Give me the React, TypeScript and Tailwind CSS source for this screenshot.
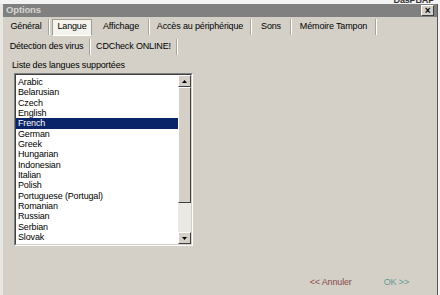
import React from "react";

const langs = [
  "Arabic",
  "Belarusian",
  "Czech",
  "English",
  "French",
  "German",
  "Greek",
  "Hungarian",
  "Indonesian",
  "Italian",
  "Polish",
  "Portuguese (Portugal)",
  "Romanian",
  "Russian",
  "Serbian",
  "Slovak",
  "Slovenian",
];

const Tab = ({ label, w, active }: { label: string; w: string; active?: boolean }) => (
  <div className={`${w} h-full flex items-center shrink-0`}>
    {active ? (
      <div className="h-[17px] flex-1 mx-[2px] flex items-center justify-center bg-[#f4f3ee] border border-[#a09c94] border-b-white">
        {label}
      </div>
    ) : (
      <>
        <div className="flex-1 flex items-center justify-center">{label}</div>
        <div className="h-[16px] w-[2px] border-l border-[#a8a49c] border-r border-r-white" />
      </>
    )}
  </div>
);

export default function App() {
  return (
    <div
      className="w-[440px] h-[295px] overflow-hidden bg-[#d4d0c8] text-[9px] text-black flex flex-col tracking-[-0.15px]"
      style={{ fontFamily: "'Liberation Sans', Arial, sans-serif" }}
    >
      {/* strip above window */}
      <div className="h-[4px] bg-[#f3f3f3] relative shrink-0">
        <div className="absolute right-[6px] -top-[6px] text-[9px] font-bold text-[#333]">DasPBAP</div>
      </div>

      <div className="flex flex-1 min-h-0">
        <div className="flex-1 flex flex-col border-l-[3px] border-[#e8e6e0] border-r border-r-[#555]">
          {/* title bar */}
          <div className="h-[13px] bg-[#808080] flex items-center justify-between pl-[3px] pr-[3px] shrink-0">
            <span className="font-bold text-[#d8d6d0] text-[9.5px]">Options</span>
            <div className="w-[13px] h-[11px] bg-[#d4d0c8] border border-white border-r-[#404040] border-b-[#404040] flex items-center justify-center text-[10px] font-bold leading-none">
              ×
            </div>
          </div>

          {/* tabs */}
          <div className="h-[20px] flex items-center pl-[1px] shrink-0">
            <Tab label="Général" w="w-[46px]" />
            <Tab label="Langue" w="w-[44px]" active />
            <Tab label="Affichage" w="w-[56px]" />
            <Tab label="Accès au périphérique" w="w-[102px]" />
            <Tab label="Sons" w="w-[40px]" />
            <Tab label="Mémoire Tampon" w="w-[85px]" />
          </div>
          <div className="h-[20px] flex items-center pl-[1px] shrink-0">
            <Tab label="Détection des virus" w="w-[87px]" />
            <Tab label="CDCheck ONLINE!" w="w-[87px]" />
          </div>

          {/* content */}
          <div className="flex-1 flex flex-col pl-[9px] pt-[2px]">
            <div className="leading-[12px]">Liste des langues supportées</div>
            <div className="mt-[2px] ml-[2px] w-[179px] h-[173px] border border-[#808080] border-r-white border-b-white flex">
              <div className="flex-1 border border-[#404040] border-r-[#d4d0c8] border-b-[#d4d0c8] flex bg-white overflow-hidden">
                <div className="flex-1 pt-[2px] overflow-hidden">
                  {langs.map((l) => (
                    <div
                      key={l}
                      className={`h-[10.35px] leading-[10.35px] pl-[2px] ${
                        l === "French" ? "bg-[#0a246a] text-white" : ""
                      }`}
                    >
                      {l}
                    </div>
                  ))}
                </div>
                {/* scrollbar */}
                <div className="w-[13px] flex flex-col bg-[#ebe9e4]">
                  <div className="h-[12px] bg-[#d4d0c8] border border-white border-r-[#404040] border-b-[#404040] flex items-center justify-center">
                    <svg width="5" height="3" viewBox="0 0 5 3">
                      <path d="M2.5 0L5 3H0z" fill="#000" />
                    </svg>
                  </div>
                  <div className="h-[116px] bg-[#d4d0c8] border border-white border-r-[#404040] border-b-[#404040]" />
                  <div className="flex-1" />
                  <div className="h-[12px] bg-[#d4d0c8] border border-white border-r-[#404040] border-b-[#404040] flex items-center justify-center">
                    <svg width="5" height="3" viewBox="0 0 5 3">
                      <path d="M0 0H5L2.5 3z" fill="#000" />
                    </svg>
                  </div>
                </div>
              </div>
            </div>

            <div className="flex-1" />
            <div className="flex justify-end items-center h-[16px] mb-[4px] pr-[28px] text-[9px]">
              <span className="text-[#8a4a4a] mr-[32px]">&lt;&lt; Annuler</span>
              <span className="text-[#5f9a90]">OK &gt;&gt;</span>
            </div>
          </div>
        </div>
        <div className="w-[2px] bg-[#f3f3f3]" />
      </div>
    </div>
  );
}
